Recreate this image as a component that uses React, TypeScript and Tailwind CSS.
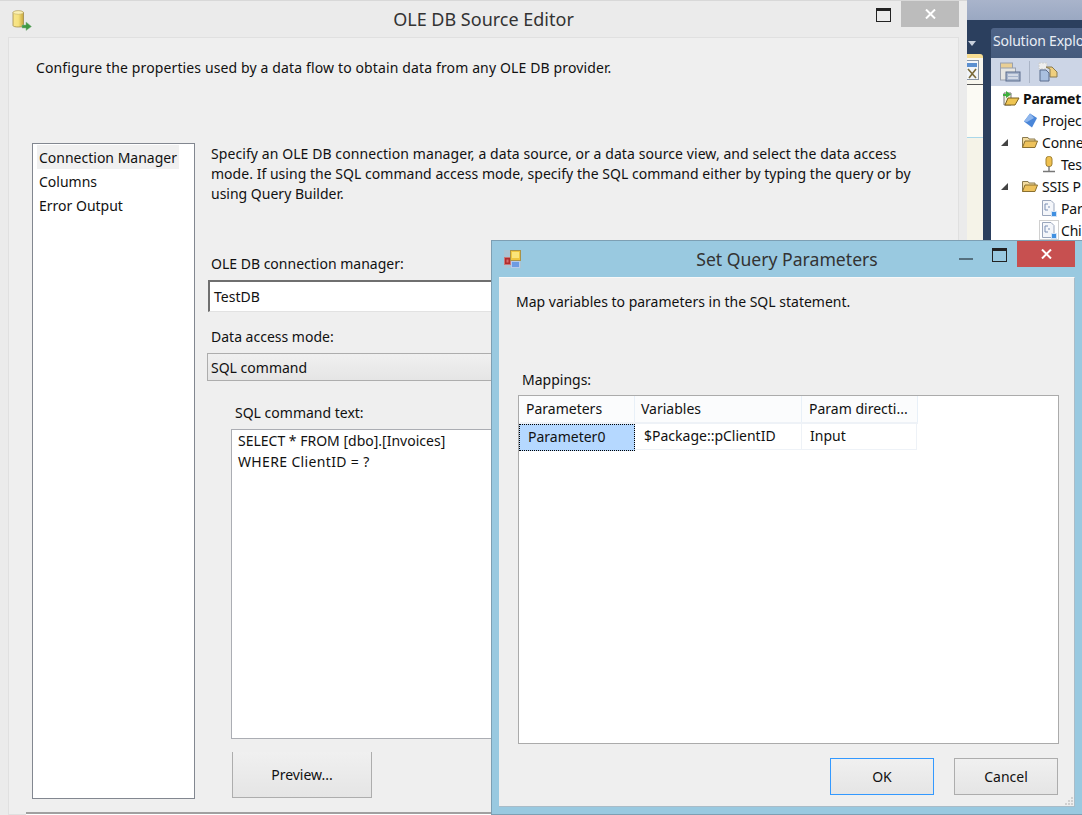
const font = "font-['Noto_Sans',sans-serif]";

function DbIcon() {
  return (
    <svg width="20" height="22" viewBox="0 0 20 22">
      <defs>
        <linearGradient id="cyl" x1="0" x2="1" y1="0" y2="0">
          <stop offset="0" stopColor="#f8e58c" />
          <stop offset="0.5" stopColor="#f6e27f" />
          <stop offset="1" stopColor="#c9a83c" />
        </linearGradient>
      </defs>
      <path d="M1 3.5C1 1.5 11.5 1.5 11.5 3.5V16.5C11.5 18.5 1 18.5 1 16.5Z" fill="url(#cyl)" stroke="#a08c4a" strokeWidth="0.8" />
      <ellipse cx="6.2" cy="3.5" rx="5" ry="1.8" fill="#fbf0b4" stroke="#b8a45c" strokeWidth="0.5" />
      <path d="M10 19V16H14V13L19.5 17.5L14 21.5V19Z" fill="#3f9a44" stroke="#8fb58f" strokeWidth="0.5" />
    </svg>
  );
}

function ParamIcon() {
  return (
    <svg width="17" height="18" viewBox="0 0 17 18">
      <rect x="0" y="0" width="17" height="18" fill="#a9c4d4" />
      <rect x="0.5" y="7.5" width="6" height="7" fill="#b02c2c" stroke="#c77" />
      <rect x="2.5" y="9.5" width="2" height="3" fill="#d96a6a" />
      <rect x="6.5" y="0.5" width="10" height="10" fill="#f0c63f" stroke="#a8924a" />
      <rect x="8" y="2" width="7" height="6" fill="#fbe47a" />
      <rect x="7.5" y="11.5" width="8" height="6" fill="#6d9be2" stroke="#b7cbe9" />
    </svg>
  );
}

function RestoreGlyph() {
  return (
    <div className="w-[15px] h-[14px] border border-[#222] border-t-[3px]" />
  );
}

function CloseGlyph() {
  return (
    <svg width="11" height="10" viewBox="0 0 11 10">
      <path d="M1 0.5L10 9.5M10 0.5L1 9.5" stroke="#fff" strokeWidth="2" />
    </svg>
  );
}

function FolderIcon() {
  return (
    <svg width="16" height="14" viewBox="0 0 16 14">
      <path d="M0.5 12.5V2.5H6L7 4H13V6" fill="#f3dca0" stroke="#8a7a50" />
      <path d="M0.5 12.5L3 6H15.5L13 12.5Z" fill="#eec25c" stroke="#8a7030" />
    </svg>
  );
}

function PackageIcon() {
  return (
    <svg width="15" height="17" viewBox="0 0 15 17">
      <path d="M0.5 0.5H9L12 3.5V15.5H0.5Z" fill="#f4f6fa" stroke="#9aa6bc" />
      <path d="M3 4H6M3 4V10H6M6 7H8" stroke="#7a8fb5" fill="none" />
      <rect x="9.5" y="11.5" width="5" height="5" fill="#3f8fe0" stroke="#cfe2f7" />
    </svg>
  );
}

function Arrow() {
  return (
    <svg width="7" height="7" viewBox="0 0 7 7">
      <path d="M7 0V7H0Z" fill="#444" />
    </svg>
  );
}

function TreeRow({ indent, arrow, icon, label, bold, boxed }: { indent: string; arrow?: boolean; icon: React.ReactNode; label: string; bold?: boolean; boxed?: boolean }) {
  return (
    <div className={`h-[22px] flex items-center whitespace-nowrap text-[14px] tracking-[-0.2px] text-[#111] ${indent} ${bold ? "font-bold" : ""}`}>
      {arrow && <div className="w-[19px] flex shrink-0"><Arrow /></div>}
      <div className={`w-[20px] h-[20px] flex items-center justify-center shrink-0 ${boxed ? "border border-[#d0d0d0]" : ""}`}>{icon}</div>
      <span className="ml-[2px]">{label}</span>
    </div>
  );
}

function VisualStudioBehind() {
  return (
    <div className="ml-[967px] w-[115px] h-[815px] overflow-hidden bg-[#2b3f5e]">
      <div className="h-[20px] bg-gradient-to-b from-[#a9b4cb] to-[#9aa8c2]" />
      <div className="flex">
        <div className="w-[16px] h-[220px] flex flex-col shrink-0">
          <div className="h-[34px] flex items-start pt-[21px] pl-[1px]">
            <div className="w-0 h-0 border-x-[4px] border-x-transparent border-t-[5px] border-t-[#c8d0dc]" />
          </div>
          <div className="h-[4px] bg-[#f7dd93] rounded-tr-[3px]" />
          <div className="h-[27px] bg-[#f8f6ee] border-b border-[#555] flex items-start pt-[2px]">
            <svg width="12" height="20" viewBox="0 0 12 20">
              <rect x="-1" y="0.5" width="12.5" height="19" fill="#f2f5f9" stroke="#8a96a6" />
              <rect x="0" y="3" width="10" height="4" fill="#5b8fd0" />
              <path d="M1 9L9 18M9 9L2 18" stroke="#7a6a3a" strokeWidth="1.6" />
            </svg>
          </div>
          <div className="h-[52px] bg-[#fbfaf4]" />
          <div className="h-[1px] bg-[#a9d7ea]" />
          <div className="flex-1 bg-[#f5f3e8]" />
        </div>
        <div className="w-[8px] shrink-0" />
        <div className="w-[91px] shrink-0 mt-[8px]">
          <div className="h-[30px] rounded-tl-[3px] bg-gradient-to-b from-[#4f6488] to-[#445a7c] text-[#e8edf5] text-[14px] tracking-[-0.2px] pl-[2px] leading-[26px] whitespace-nowrap overflow-hidden">Solution Explo</div>
          <div className="h-[28px] bg-[#ccd5e6] flex items-center pl-[9px]">
            <svg width="21" height="20" viewBox="0 0 21 20">
              <rect x="0.5" y="1" width="12" height="7" fill="#e9cf95" stroke="#98a0ae" />
              <rect x="0.5" y="6" width="15" height="12" fill="#e6e6e2" stroke="#98a0ae" />
              <rect x="6" y="10" width="14" height="9" fill="#a7b5cc" stroke="#5a6c8c" />
              <path d="M8 13H18M8 16H18" stroke="#fff" />
            </svg>
            <div className="w-px h-[22px] bg-[#aab4c6] mx-[8px]" />
            <svg width="20" height="20" viewBox="0 0 20 20">
              <path d="M1 1H9V7H1Z" fill="#eee" stroke="#ccc" strokeDasharray="2 1" />
              <path d="M8 5H14L19 10V15H12V7Z" fill="#efcf7f" stroke="#8a7a50" />
              <path d="M2 8H8L11 11V19H2Z" fill="#a9c0e0" stroke="#5a6c8c" />
            </svg>
          </div>
          <div className="bg-white h-[170px] pt-px overflow-hidden">
            <TreeRow indent="pl-[10px]" bold label="Paramet" icon={
              <svg width="18" height="17" viewBox="0 0 18 17">
                <path d="M2 3H9V15H2Z" fill="#f5f0e0" stroke="#777" />
                <path d="M3 15L6 8H17L13 15Z" fill="#efc552" stroke="#7a6020" />
                <path d="M1 4H4V1L9 4.5L4 8V6H1Z" fill="#3fae3f" />
              </svg>
            } />
            <TreeRow indent="pl-[29px]" label="Projec" icon={
              <svg width="15" height="15" viewBox="0 0 15 15">
                <path d="M7 0.5L14 5L9 14.5L1 8.5Z" fill="#4a86d8" />
                <path d="M7 0.5L11 5L4 9L1 8.5Z" fill="#8fb6ec" />
              </svg>
            } />
            <TreeRow indent="pl-[10px]" arrow label="Conne" icon={<FolderIcon />} />
            <TreeRow indent="pl-[48px]" label="Tes" icon={
              <svg width="14" height="17" viewBox="0 0 14 17">
                <rect x="4" y="0.5" width="6" height="10" rx="2.5" fill="#efc04f" stroke="#a08030" />
                <path d="M7 10V15M1 15.5H13" stroke="#777" strokeWidth="1.4" />
              </svg>
            } />
            <TreeRow indent="pl-[10px]" arrow label="SSIS P" icon={<FolderIcon />} />
            <TreeRow indent="pl-[48px]" label="Par" icon={<PackageIcon />} />
            <TreeRow indent="pl-[48px]" boxed label="Chi" icon={<PackageIcon />} />
          </div>
        </div>
      </div>
    </div>
  );
}

function SourceEditor() {
  return (
    <div className="absolute left-0 top-0 w-[967px] h-[815px] bg-[#ebebeb] border-t border-[#d8d8d8] overflow-hidden">
      <div className="h-[36px] grid grid-cols-[1fr_auto_1fr]">
        <div className="pl-[12px] pt-[8px]"><DbIcon /></div>
        <div className="text-[#333] text-[18px] pt-[5px]">OLE DB Source Editor</div>
        <div className="flex justify-end items-start pr-[8px]">
          <div className="mt-[7px] mr-[10px]"><RestoreGlyph /></div>
          <div className="w-[58px] h-[26px] bg-[#bcbcbc] flex items-center justify-center"><CloseGlyph /></div>
        </div>
      </div>
      <div className="ml-[8px] w-[951px] h-[778px] border border-[#e0e0e0] bg-[#efefef]">
        <div className="pl-[27px] pt-[20px] leading-[20px] h-[105px] text-[14px] text-[#111] tracking-[0.13px]">
          Configure the properties used by a data flow to obtain data from any OLE DB provider.
        </div>
        <div className="flex pl-[23px]">
          <div className="w-[163px] h-[656px] border border-[#828790] bg-white pt-px pl-[4px] shrink-0 text-[14px] text-[#111]">
            <div className="w-[142px] h-[24px] leading-[25px] pl-[2px] bg-[#f0f0f0]">Connection Manager</div>
            <div className="h-[24px] leading-[25px] pl-[2px]">Columns</div>
            <div className="h-[24px] leading-[25px] pl-[2px]">Error Output</div>
          </div>
          <div className="ml-[16px] w-[736px] text-[14px] text-[#111] leading-[20px]">
            <div className="mt-px whitespace-nowrap">
              <div className="tracking-[0.08px]">Specify an OLE DB connection manager, a data source, or a data source view, and select the data access</div>
              <div className="tracking-[0.03px]">mode. If using the SQL command access mode, specify the SQL command either by typing the query or by</div>
              <div>using Query Builder.</div>
            </div>
            <div className="mt-[50px]">OLE DB connection manager:</div>
            <div className="mt-[6px] ml-[-3px] h-[32px] bg-white border-l-2 border-t-2 border-[#6f6f6f] border-b border-b-[#e2e2e2] pl-[4px] leading-[30px]">TestDB</div>
            <div className="mt-[15px]">Data access mode:</div>
            <div className="mt-[6px] ml-[-4px] h-[28px] border border-[#adadad] bg-gradient-to-b from-[#f0f0f0] to-[#e5e5e5] pl-[3px] leading-[27px]">SQL command</div>
            <div className="mt-[22px] ml-[24px]">SQL command text:</div>
            <div className="mt-[6px] ml-[20px] h-[310px] bg-white border border-[#abadb3] pl-[6px] leading-[21px]">
              <div>SELECT * FROM [dbo].[Invoices]</div>
              <div className="tracking-[0.35px]">WHERE ClientID = ?</div>
            </div>
            <div className="mt-[13px] ml-[21px] w-[140px] h-[46px] border border-t-0 border-[#adadad] bg-gradient-to-b from-[#f0f0f0] to-[#e5e5e5] flex items-center justify-center">Preview...</div>
          </div>
        </div>
        <div className="mt-[13px] ml-[17px] h-[4px] bg-white border-t-2 border-[#a0a0a0]" />
      </div>
    </div>
  );
}

function QueryParameters() {
  const headCell = "h-[26px] leading-[26px] border-r border-[#e8f0f8] bg-[#fbfcfd] whitespace-nowrap";
  const rowCell = "h-[26px] leading-[24px] border-r border-b border-[#eef2f7] whitespace-nowrap";
  return (
    <div className="absolute left-[491px] top-[240px] w-[592px] h-[575px] bg-[#99c9e0] border border-[#7d9fb3]">
      <div className="h-[36px] grid grid-cols-[1fr_auto_1fr]">
        <div className="pl-[12px] pt-[9px]"><ParamIcon /></div>
        <div className="text-[#333] text-[17.6px] pt-[5px]">Set Query Parameters</div>
        <div className="flex justify-end items-start pr-[7px]">
          <div className="mt-[17px] mr-[19px] w-[14px] h-[2px] bg-[#55707f]" />
          <div className="mt-[7px] mr-[10px]"><RestoreGlyph /></div>
          <div className="w-[58px] h-[26px] bg-[#c75050] flex items-center justify-center"><CloseGlyph /></div>
        </div>
      </div>
      <div className="relative ml-[7px] w-[576px] h-[530px] bg-[#efefef] border-t border-r border-b border-t-[#f8f8f8] border-r-[#a9bcc8] border-b-[#a9bcc8] text-[14px] text-[#111] leading-[20px]">
        <div className="pl-[17px] pt-[14px]">Map variables to parameters in the SQL statement.</div>
        <div className="pl-[23px] mt-[58px]">Mappings:</div>
        <div className="mt-[5px] ml-[19px] w-[541px] h-[349px] bg-white border border-[#ababab]">
          <div className="flex border-b-2 border-[#eef2f7] w-fit">
            <div className={`${headCell} w-[116px] pl-[7px]`}>Parameters</div>
            <div className={`${headCell} w-[167px] pl-[6px]`}>Variables</div>
            <div className={`${headCell} w-[116px] pl-[7px]`}>Param directi...</div>
          </div>
          <div className="flex w-fit">
            <div className="h-[27px] w-[116px] leading-[24px] pl-[8px] bg-[#b5d8ff] border border-dotted border-black">Parameter0</div>
            <div className={`${rowCell} w-[167px] pl-[9px]`}>$Package::pClientID</div>
            <div className={`${rowCell} w-[115px] pl-[8px]`}>Input</div>
          </div>
        </div>
        <div className="mt-[14px] pr-[16px] flex justify-end gap-[20px]">
          <div className="w-[104px] h-[37px] border border-[#3399ff] bg-gradient-to-b from-[#f0f0f0] to-[#e5e5e5] flex items-center justify-center">OK</div>
          <div className="w-[104px] h-[37px] border border-[#adadad] bg-gradient-to-b from-[#f0f0f0] to-[#e5e5e5] flex items-center justify-center">Cancel</div>
        </div>
        <svg className="absolute right-0 bottom-0" width="10" height="10" viewBox="0 0 10 10">
          <path d="M7 1H9V3H7ZM4 4H6V6H4ZM7 4H9V6H7ZM1 7H3V9H1ZM4 7H6V9H4ZM7 7H9V9H7Z" fill="#d0d0d0" />
        </svg>
      </div>
    </div>
  );
}

export default function App() {
  return (
    <div className={`relative w-[1082px] h-[815px] overflow-hidden ${font}`}>
      <VisualStudioBehind />
      <SourceEditor />
      <QueryParameters />
    </div>
  );
}
